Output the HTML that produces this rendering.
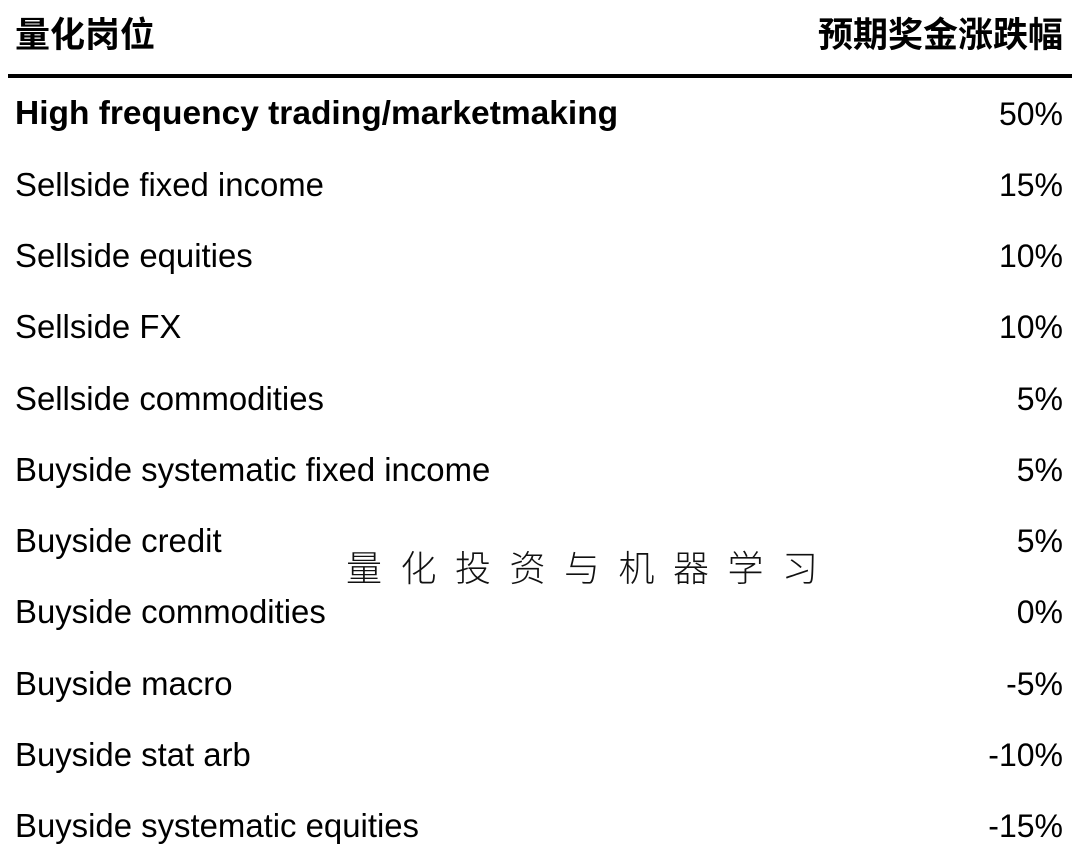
<!DOCTYPE html>
<html><head><meta charset="utf-8"><style>
body{margin:0;width:1080px;height:865px;background:#fff;position:relative;overflow:hidden;font-family:"Liberation Sans","Noto Sans CJK SC",sans-serif;color:#000}
.h{position:absolute;top:13px;font-size:35px;font-weight:bold;line-height:40px;font-family:"Noto Sans CJK SC",sans-serif}
.line{position:absolute;left:8px;width:1064px;top:74px;height:4px;background:#000}
.r{position:absolute;left:15px;width:1048px;height:36px;line-height:36px;font-size:32.9px}
.r span{position:absolute;right:0;top:0;font-size:32px}
.wm{position:absolute;left:346px;top:543px;font-family:"Noto Sans CJK SC",sans-serif;font-weight:300;font-size:36px;letter-spacing:18.5px;line-height:46px;color:#111}
</style></head><body>
<div class="h" style="left:15px">量化岗位</div>
<div class="h" style="right:17px">预期奖金涨跌幅</div>
<div class="line"></div>
<div class="r" style="top:96px;font-weight:bold;font-size:33.5px">High frequency trading/marketmaking<span style="font-weight:normal">50%</span></div>
<div class="r" style="top:167px">Sellside fixed income<span>15%</span></div>
<div class="r" style="top:238px">Sellside equities<span>10%</span></div>
<div class="r" style="top:309px">Sellside FX<span>10%</span></div>
<div class="r" style="top:381px">Sellside commodities<span>5%</span></div>
<div class="r" style="top:452px">Buyside systematic fixed income<span>5%</span></div>
<div class="r" style="top:523px">Buyside credit<span>5%</span></div>
<div class="r" style="top:594px">Buyside commodities<span>0%</span></div>
<div class="r" style="top:666px">Buyside macro<span>-5%</span></div>
<div class="r" style="top:737px">Buyside stat arb<span>-10%</span></div>
<div class="r" style="top:808px">Buyside systematic equities<span>-15%</span></div>
<div class="wm">量化投资与机器学习</div>
</body></html>
